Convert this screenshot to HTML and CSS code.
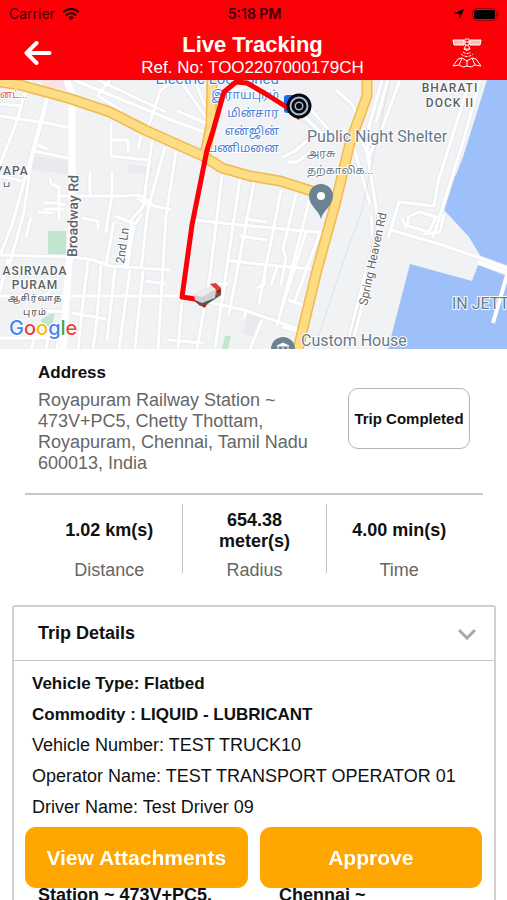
FILE: index.html
```html
<!DOCTYPE html>
<html lang="en">
<head>
<meta charset="utf-8">
<meta name="viewport" content="width=device-width, initial-scale=1">
<title>Live Tracking</title>
<link rel="stylesheet" href="styles.css">
</head>
<body>
<div class="app">
  <header class="header">
    <div class="status">
      <div class="status-left">
        <span>Carrier</span>
        <svg class="wifi" viewBox="0 0 18 14" aria-hidden="true">
          <path d="M1.2 5.2a11.3 11.3 0 0 1 15.6 0M4 8.3a7.3 7.3 0 0 1 10 0"/>
          <path class="wifi-dot" d="M9 13.3 6.2 10.5a4 4 0 0 1 5.6 0z"/>
        </svg>
      </div>
      <time class="status-time">5:18 PM</time>
      <div class="status-right">
        <svg class="location" viewBox="0 0 12 12" aria-hidden="true"><path d="M11.3.7 6.6 11.3 6 6 .7 5.4z"/></svg>
        <svg class="battery" viewBox="0 0 28 13" aria-hidden="true">
          <rect class="battery-shell" x=".5" y=".5" width="24" height="12" rx="4"/>
          <rect x="2" y="2" width="21" height="9" rx="2"/>
          <path class="battery-tip" d="M26 4.5q2 2 0 4z"/>
        </svg>
      </div>
    </div>
    <div class="navbar">
      <button class="icon-button" type="button" aria-label="Back">
        <svg class="back" viewBox="0 0 28 24" aria-hidden="true"><path d="M12.500 2 2.500 12l10 10M2.500 12h23"/></svg>
      </button>
      <div class="heading">
        <h1>Live Tracking</h1>
        <p>Ref. No: TOO2207000179CH</p>
      </div>
      <button class="icon-button" type="button" aria-label="Satellite view">
        <svg class="satellite" viewBox="0 0 30 30" aria-hidden="true">
          <path class="satellite-panel" d="M1 2h11v5H2zM18 2h11l-1 5H18z"/>
          <path d="M13 1h4v6h-4zM12 4h6M14 7l-2 4q3 3 6 0l-2-4M12 11h6"/>
          <path class="satellite-wave" d="M11 14q4 3 8 0M9 16q6 5 12 0"/>
          <path d="M6 21l4-1 5 3 5-3 4 1 5 7-6-1-4 2-4-1-4 1-4-2-6 1zM10 20l-3 7M15 23v5M20 20l3 7"/>
        </svg>
      </button>
    </div>
  </header>

  <svg class="map" viewBox="0 80 507 269" role="img" aria-label="Route map">
    <defs>
      <g id="streets">
        <path d="M28 80 18 118 0 165M49 94 31 162 24 212 8 270M47 96 35 142 12 225 0 255M31 80 25 96"/>
        <path d="M0 116 46 123 72 128M0 104 22 106M34 151 68 158M37 145l11 4M0 176 22 181M98 80 166 112M97 95l25 16M110 80l-11 14M74 80l100 41M148 128l12-37 14-11"/>
        <path d="M111 122v34l37 4M112 140h16v11M141 136l-3 13M152 141l-9 66-11 12-7 50M165 147l-17 62-7 60M137 198l10 6 24 6"/>
        <path d="M50 178l1 6 8 3v32M44 203h14l7 2M44 209h20M57 196h66l17-1 12 9M90 172v24M112 171v25l-4 22-2 14"/>
        <path d="M0 255 70 257 90 259 110 266 170 270M31 217l-5 20M82 218l16 3v8M38 212l15 1M115 216l20 8 7-10M114 222l-8 42M88 261 82 310 78 349M101 265l-4 53-4 31M115 268l-8 72M72 313l34 6M0 291l8-32M130 270l-11 79M143 271l-8 78M145 281l21 3M134 226l-7 43"/>
        <path d="M0 296l182 0 62 14 66 23M34 302l17-11M44 311l26 1M0 338h64M40 324l-9 25M50 327l-4 22M60 326l-3 23M31 336l31 4"/>
        <path d="M176 151 166 216 158 349M222 175l-12 100-13 74M240 178l-25 170M254 182l-25 132M281 190l-18 92-4 22M296 194l-13 55 3 8-5 28M310 198l-33 128"/>
        <path d="M194 220l46 5 87 8M226 260l32 4 62 6M240 236l27 4M216 284h12M245 219l21 3M266 264l-2 20-7 4M278 265l-7 20M288 300l20 7M283 327l17 5M182 300l-4 49M262 320l-12 29M306 232l-24 76M320 233l-26 70M168 340l35 3M246 310l-2 8"/>
        <path d="M180 80l31 45-34-14M168 119l36 13M195 80l10 27M220 94l50-14M300 112l24 24M307 105l22 25M283 157l12-6 14-12M287 162h10l14-10"/>
        <path d="M336 90l16 14 4 9M382 80l-13 46-2 32M400 80l-20 54-12 24 4 24 5 32M352 141l18 63M346 160l-5 26M388 80l-12 42M361 139l10 24M371 216l2 28-18 70-8 34M380 214l-8 53-18 70"/>
        <path d="M480 80l-17 62-30 96M470 80l-32 102-4 24-35-4-11 36M391 230l51 15 38 13 27 10M408 217l11-5 17 5-7 15-21-6zM402 218l4 10M444 214l-4 18-16 2"/>
      </g>
    </defs>
    <rect class="land" y="80" width="507" height="269"/>
    <path class="block" d="M35 156 68 160v14l-37-4zM128 165l24 2v6h-24zM247 312l16 5-7 20-13-3z"/>
    <path class="park" d="M48 231h18v25H48zM41 320l14-9-3 16-10-1zM225 336h6l-3 13h-6z"/>
    <path class="hospital" d="M39 80h24l4 10-22-4z"/>
    <path class="water" d="M487 80 463 157 456 175 450 182 444 210 469 237 483 260 507 268V80zM410 264l62 17 6-16 29 11v73H388z"/>
    <use href="#streets" class="street-edge"/>
    <use href="#streets" class="street"/>
    <path class="avenue" d="M67 80l5 16v70l1 50-5 60-5 73"/>
    <path class="pier" d="M507 275l-14 48M478 262l29 10"/>
    <path class="rail" d="M390 80l-28 130-20 55-28 84M377 215l-14 79-16 55M304 110l17 18M298 117l18 15"/>
    <path class="highway-edge" d="M0 82 20 85 68 98 110 112 145 130 203 156 222 168 250 176 280 181 315 192 336 200M212 80l-1 45-6 29M367 80v16l-17 47-15 62-18 65-19 79"/>
    <path class="highway" d="M0 82 20 85 68 98 110 112 145 130 203 156 222 168 250 176 280 181 315 192 336 200M212 80l-1 45-6 29M367 80v16l-17 47-15 62-18 65-19 79"/>

    <g class="label rail-label" text-anchor="end">
      <text x="279" y="84">Electric Loco Shed</text>
      <text class="tamil" x="279" y="99">இராயபுரம்</text>
      <text class="tamil" x="279" y="117">மின்சார</text>
      <text class="tamil" x="279" y="135">என்ஜின்</text>
      <text class="tamil" x="279" y="152">பணிமனை</text>
    </g>
    <g class="label hospital-label">
      <text x="0" y="98">னட்...</text>
    </g>
    <g class="label area-label" text-anchor="middle">
      <text x="450" y="92">BHARATI</text>
      <text x="450" y="107">DOCK II</text>
      <text x="12" y="175">YAPA</text>
      <text class="tamil" x="7" y="187">ப</text>
      <text x="35" y="275">ASIRVADA</text>
      <text x="35" y="289">PURAM</text>
      <text class="tamil" x="35" y="301">ஆசிர்வாத</text>
      <text class="tamil" x="35" y="315">புரம்</text>
    </g>
    <g class="label place-label">
      <text x="307" y="142">Public Night Shelter</text>
      <text class="tamil" x="307" y="157">அரசு</text>
      <text class="tamil" x="307" y="174">தற்காலிக...</text>
      <text x="301" y="346">Custom House</text>
      <text x="452" y="309">IN JETTY</text>
    </g>
    <g class="label road-label">
      <text class="major" transform="translate(77 257) rotate(-89)">Broadway Rd</text>
      <text transform="translate(124 264) rotate(-82)">2nd Ln</text>
      <text transform="translate(367 306) rotate(-78)">Spring Heaven Rd</text>
    </g>

    <path class="pin" d="M321 219c-2-9-12-13-12-23a12 12 0 0 1 24 0c0 10-10 14-12 23z"/>
    <circle class="pin-dot" cx="321" cy="196" r="4"/>
    <circle class="pin" cx="283" cy="349" r="12"/>
    <path class="pin-mark" d="M277 346l6-3 6 3zM278 347v3M283 347v3M288 347v3"/>

    <rect class="station" x="284" y="95" width="18" height="18" rx="3"/>
    <path class="route" d="M300 118 288 108 266 94 247 83 236 82 224 92 213 131 207 150 192 225 182 297 195 299 206 306"/>
    <circle class="target-fill" cx="299" cy="106" r="11"/>
    <circle class="target" cx="299" cy="106" r="11"/>
    <circle class="target" cx="299" cy="106" r="6"/>
    <circle class="target-dot" cx="299" cy="106" r="3"/>

    <path class="truck-shade" d="M195 301l5 5 6-1 15-10v-5l-6 1z"/>
    <path class="truck-cab" d="M210 284l6-1 5 5v5l-6 3-1-8z"/>
    <path class="truck-side" d="M194 295l16-9 6 4-1 8-13 5-7-3z"/>
    <path class="truck-top" d="M194 295l16-9 6 3-14 8z"/>
    <path class="truck-glass" d="M217 291l4-2v3l-4 2z"/>

    <text class="google" x="9" y="335"><tspan class="g-blue">G</tspan><tspan class="g-red">o</tspan><tspan class="g-yellow">o</tspan><tspan class="g-blue">g</tspan><tspan class="g-green">l</tspan><tspan class="g-red">e</tspan></text>
  </svg>

  <main class="content">
    <section class="summary">
      <div class="address-row">
        <div class="address">
          <h2>Address</h2>
          <p>Royapuram Railway Station ~ 473V+PC5, Chetty Thottam, Royapuram, Chennai, Tamil Nadu 600013, India</p>
        </div>
        <button class="trip-status" type="button">Trip Completed</button>
      </div>
      <dl class="stats">
        <div class="stat"><dd>1.02 km(s)</dd><dt>Distance</dt></div>
        <div class="stat"><dd>654.38 meter(s)</dd><dt>Radius</dt></div>
        <div class="stat"><dd>4.00 min(s)</dd><dt>Time</dt></div>
      </dl>
    </section>

    <section class="details">
      <button class="details-toggle" type="button" aria-expanded="true">
        <span>Trip Details</span>
        <svg class="chevron" viewBox="0 0 20 12" aria-hidden="true"><path d="M2 2l8 8 8-8"/></svg>
      </button>
      <ul class="details-list">
        <li class="strong">Vehicle Type: Flatbed</li>
        <li class="strong">Commodity : LIQUID - LUBRICANT</li>
        <li>Vehicle Number: TEST TRUCK10</li>
        <li>Operator Name: TEST TRANSPORT OPERATOR 01</li>
        <li>Driver Name: Test Driver 09</li>
      </ul>
      <div class="stops">
        <p>Station ~ 473V+PC5,</p>
        <p>Chennai ~</p>
      </div>
    </section>
  </main>

  <footer class="actions">
    <button type="button">View Attachments</button>
    <button type="button">Approve</button>
  </footer>
</div>
</body>
</html>
```
FILE: styles.css
```css
* { box-sizing: border-box; }

body, h1, h2, p, dl, dd, ul { margin: 0; }

body {
  background: #fff;
  color: #111;
  font-family: "Liberation Sans", Arial, sans-serif;
}

button {
  margin: 0;
  padding: 0;
  border: 0;
  background: none;
  color: inherit;
  font: inherit;
  cursor: pointer;
}

svg { display: block; }

.app {
  display: flex;
  flex-direction: column;
  height: 100vh;
  overflow: hidden;
}

/* Header */
.header {
  flex: none;
  height: 80px;
  background: #fc0007;
}

.status {
  display: grid;
  grid-template-columns: 1fr auto 1fr;
  align-items: center;
  height: 28px;
  padding: 0 7px 0 9px;
  color: #3c0004;
  font: 14px/28px Inter, "Liberation Sans", sans-serif;
}

.status-left, .status-right {
  display: flex;
  align-items: center;
  gap: 7px;
}

.status-right { justify-content: flex-end; }
.status-time { font-weight: 600; }

.wifi { width: 18px; height: 14px; fill: none; stroke: #200; stroke-width: 2; }
.wifi-dot { fill: #200; stroke: none; }
.location { width: 12px; height: 12px; fill: #100; }
.battery { width: 28px; height: 13px; }
.battery-shell { fill: none; stroke: #a00006; }
.battery-tip { fill: #a00006; }

.navbar {
  display: grid;
  grid-template-columns: 60px 1fr 60px;
  align-items: center;
  height: 52px;
  padding: 2px 10px 0 8px;
  color: #fff;
}

.icon-button { display: flex; justify-content: center; margin-top: -4px; }
.back { width: 28px; height: 24px; fill: none; stroke: #fff; stroke-width: 4; stroke-linecap: round; stroke-linejoin: round; }
.satellite { width: 30px; height: 30px; fill: none; stroke: #fff; stroke-width: 1; stroke-linejoin: round; }
.satellite-panel { fill: #ffb9b9; }
.satellite-wave { stroke-dasharray: 3 1; }

.heading { text-align: center; white-space: nowrap; }
.heading h1 { font-size: 22px; line-height: 24px; }
.heading p { font-size: 17px; line-height: 21px; }

/* Map */
.map { flex: none; width: 100%; height: auto; }
.land { fill: #f0f2f4; }
.block { fill: #e8eaed; }
.park { fill: #c0e6cd; }
.hospital { fill: #fbe3e1; }
.water { fill: #9dc0fa; }

.street-edge, .street, .avenue, .pier, .rail, .highway, .highway-edge, .route {
  fill: none;
  stroke-linejoin: round;
}

.street-edge { stroke: #e8eaed; stroke-width: 5; }
.street { stroke: #fff; stroke-width: 3; }
.avenue { stroke: #fff; stroke-width: 7; }
.pier { stroke: #fff; stroke-width: 4; }
.rail { stroke: #dfe2e5; stroke-width: 1; }
.highway-edge { stroke: #f3b84e; stroke-width: 11; }
.highway { stroke: #fddd83; stroke-width: 8; }
.route { stroke: #fb0007; stroke-width: 5; }

.label {
  font-family: Roboto, "Noto Sans Tamil", "Noto Sans", sans-serif;
  paint-order: stroke;
  stroke: #fff;
  stroke-width: 2px;
  stroke-linejoin: round;
}

.rail-label { fill: #4a7fd8; font-size: 15px; }
.rail-label .tamil { font-size: 12px; }
.hospital-label { fill: #e25b58; font-size: 10px; }
.area-label { fill: #5b6066; font-size: 12px; font-weight: 500; letter-spacing: 1px; }
.area-label .tamil { font-size: 9px; }
.place-label { fill: #66798a; font-size: 16px; }
.place-label .tamil { font-size: 11px; }
.road-label { fill: #5f6469; font-size: 12px; }
.road-label .major { font-size: 14px; font-weight: 500; }

.pin { fill: #6b8291; }
.pin-dot { fill: #fff; }
.pin-mark { fill: #fff; stroke: #fff; }
.station { fill: #1a6cf0; }
.target-fill { fill: #a9bddc; }
.target { fill: none; stroke: #07090c; stroke-width: 3; }
.target-dot { fill: #07090c; }

.truck-shade { fill: #55585b; }
.truck-side { fill: #cfd1d3; }
.truck-top { fill: #ececec; }
.truck-cab { fill: #dc4032; }
.truck-glass { fill: #5c3937; }

.google {
  font: 500 20px Inter, sans-serif;
  paint-order: stroke;
  stroke: #fff;
  stroke-width: 2px;
}
.g-blue { fill: #4285f4; }
.g-red { fill: #ea4335; }
.g-yellow { fill: #fbbc05; }
.g-green { fill: #34a853; }

/* Address and trip figures */
.content {
  flex: 1;
  min-height: 0;
  overflow: hidden;
  padding: 13px 11px 0 12px;
}

.summary { padding: 0 13px; }

.address-row {
  display: flex;
  align-items: center;
  justify-content: space-between;
  gap: 24px;
  padding: 0 13px 19px;
  border-bottom: 2px solid #c8c8c8;
}

.address { max-width: 286px; }
.address h2 { margin-bottom: 6px; font-size: 17px; line-height: 22px; }
.address p { color: #666; font-size: 18px; line-height: 21px; }

.trip-status {
  flex: none;
  width: 122px;
  height: 61px;
  border: 1px solid #b4b4b4;
  border-radius: 10px;
  color: #111;
  font-size: 15px;
  font-weight: 700;
  white-space: nowrap;
}

.stats {
  display: grid;
  grid-template-columns: repeat(3, 1fr);
  margin-top: 9px;
  padding: 0 12px;
}

.stat {
  height: 69px;
  padding: 0 12px;
  text-align: center;
}

.stat + .stat { border-left: 1px solid #c4c4c4; }

.stat dd {
  display: flex;
  align-items: center;
  justify-content: center;
  height: 53px;
  font-size: 18px;
  font-weight: 700;
  line-height: 21px;
}

.stat dt { color: #666; font-size: 18px; line-height: 26px; }

/* Trip details */
.details {
  min-height: 400px;
  margin-top: 32px;
  border: 2px solid #d0d0d0;
  border-radius: 3px;
}

.details-toggle {
  display: flex;
  align-items: center;
  justify-content: space-between;
  width: 100%;
  height: 54px;
  padding: 0 17px 0 24px;
  border-bottom: 1px solid #c4c4c4;
  font-size: 18px;
  font-weight: 700;
}

.chevron { width: 20px; height: 12px; fill: none; stroke: #a8a8a8; stroke-width: 3; }

.details-list {
  padding: 7px 18px 0;
  list-style: none;
  font-size: 18px;
  line-height: 31px;
}

.details-list .strong { font-size: 17px; font-weight: 700; }

.stops {
  display: grid;
  grid-template-columns: 1fr 1fr;
  gap: 26px;
  padding: 62px 0 0 24px;
  font-size: 18px;
  font-weight: 700;
  line-height: 21px;
}

.actions {
  position: fixed;
  right: 25px;
  bottom: 12px;
  left: 25px;
  display: grid;
  grid-template-columns: 1fr 1fr;
  gap: 12px;
}

.actions button {
  height: 61px;
  border-radius: 11px;
  background: #ffa600;
  color: #fff;
  font-size: 21px;
  font-weight: 700;
}
```
